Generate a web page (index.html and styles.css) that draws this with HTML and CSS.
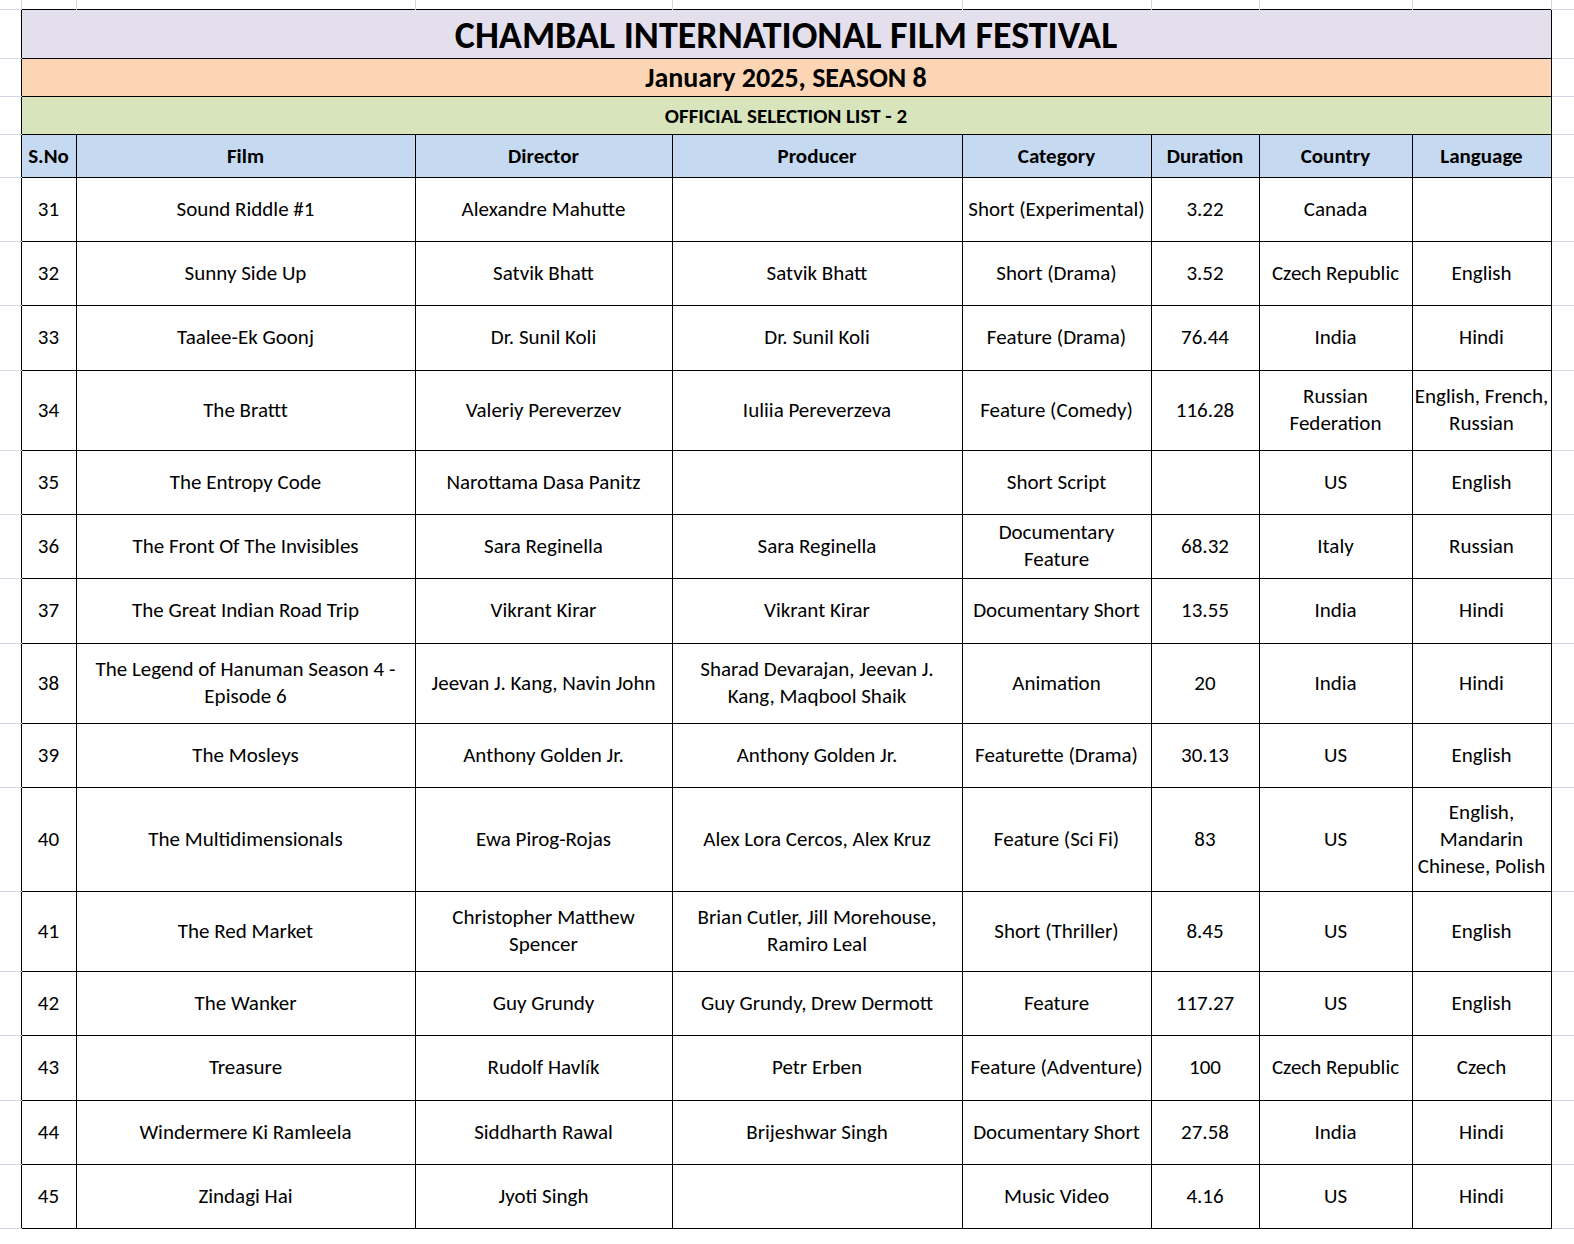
FILE: index.html
```html
<!DOCTYPE html>
<html lang="en">
<head>
<meta charset="utf-8">
<title>Chambal International Film Festival – Official Selection List 2</title>
<link rel="stylesheet" href="styles.css">
</head>
<body>
<table class="sheet">
  <colgroup>
    <col class="c-ml">
    <col class="c-sno">
    <col class="c-film">
    <col class="c-dir">
    <col class="c-prod">
    <col class="c-cat">
    <col class="c-dur">
    <col class="c-cty">
    <col class="c-lang">
    <col class="c-mr">
  </colgroup>
  <tbody>
    <tr class="r-top">
      <td class="tl"></td>
      <td class="tg"></td><td class="tg"></td><td class="tg"></td><td class="tg"></td>
      <td class="tg"></td><td class="tg"></td><td class="tg"></td><td class="tg"></td>
      <td class="tr"></td>
    </tr>
    <tr class="r-title">
      <td class="ml"></td>
      <td colspan="8" class="title">CHAMBAL INTERNATIONAL FILM FESTIVAL</td>
      <td class="mr"></td>
    </tr>
    <tr class="r-sub">
      <td class="ml"></td>
      <td colspan="8" class="sub">January 2025, SEASON 8</td>
      <td class="mr"></td>
    </tr>
    <tr class="r-list">
      <td class="ml"></td>
      <td colspan="8" class="list">OFFICIAL SELECTION LIST - 2</td>
      <td class="mr"></td>
    </tr>
    <tr class="r-head">
      <td class="ml"></td>
      <th>S.No</th><th>Film</th><th>Director</th><th>Producer</th>
      <th>Category</th><th>Duration</th><th>Country</th><th>Language</th>
      <td class="mr"></td>
    </tr>
    <tr class="r1">
      <td class="ml"></td>
      <td>31</td><td>Sound Riddle #1</td><td>Alexandre Mahutte</td><td></td>
      <td>Short (Experimental)</td><td>3.22</td><td>Canada</td><td></td>
      <td class="mr"></td>
    </tr>
    <tr class="r1">
      <td class="ml"></td>
      <td>32</td><td>Sunny Side Up</td><td>Satvik Bhatt</td><td>Satvik Bhatt</td>
      <td>Short (Drama)</td><td>3.52</td><td>Czech Republic</td><td>English</td>
      <td class="mr"></td>
    </tr>
    <tr class="r1b">
      <td class="ml"></td>
      <td>33</td><td>Taalee-Ek Goonj</td><td>Dr. Sunil Koli</td><td>Dr. Sunil Koli</td>
      <td>Feature (Drama)</td><td>76.44</td><td>India</td><td>Hindi</td>
      <td class="mr"></td>
    </tr>
    <tr class="r2">
      <td class="ml"></td>
      <td>34</td><td>The Brattt</td><td>Valeriy Pereverzev</td><td>Iuliia Pereverzeva</td>
      <td>Feature (Comedy)</td><td>116.28</td><td>Russian<br>Federation</td><td>English, French,<br>Russian</td>
      <td class="mr"></td>
    </tr>
    <tr class="r1">
      <td class="ml"></td>
      <td>35</td><td>The Entropy Code</td><td>Narottama Dasa Panitz</td><td></td>
      <td>Short Script</td><td></td><td>US</td><td>English</td>
      <td class="mr"></td>
    </tr>
    <tr class="r1">
      <td class="ml"></td>
      <td>36</td><td>The Front Of The Invisibles</td><td>Sara Reginella</td><td>Sara Reginella</td>
      <td>Documentary<br>Feature</td><td>68.32</td><td>Italy</td><td>Russian</td>
      <td class="mr"></td>
    </tr>
    <tr class="r1b">
      <td class="ml"></td>
      <td>37</td><td>The Great Indian Road Trip</td><td>Vikrant Kirar</td><td>Vikrant Kirar</td>
      <td>Documentary Short</td><td>13.55</td><td>India</td><td>Hindi</td>
      <td class="mr"></td>
    </tr>
    <tr class="r2">
      <td class="ml"></td>
      <td>38</td><td>The Legend of Hanuman Season 4 -<br>Episode 6</td><td>Jeevan J. Kang, Navin John</td><td>Sharad Devarajan, Jeevan J.<br>Kang, Maqbool Shaik</td>
      <td>Animation</td><td>20</td><td>India</td><td>Hindi</td>
      <td class="mr"></td>
    </tr>
    <tr class="r1">
      <td class="ml"></td>
      <td>39</td><td>The Mosleys</td><td>Anthony Golden Jr.</td><td>Anthony Golden Jr.</td>
      <td>Featurette (Drama)</td><td>30.13</td><td>US</td><td>English</td>
      <td class="mr"></td>
    </tr>
    <tr class="r3">
      <td class="ml"></td>
      <td>40</td><td>The Multidimensionals</td><td>Ewa Pirog-Rojas</td><td>Alex Lora Cercos, Alex Kruz</td>
      <td>Feature (Sci Fi)</td><td>83</td><td>US</td><td>English,<br>Mandarin<br>Chinese, Polish</td>
      <td class="mr"></td>
    </tr>
    <tr class="r2">
      <td class="ml"></td>
      <td>41</td><td>The Red Market</td><td>Christopher Matthew<br>Spencer</td><td>Brian Cutler, Jill Morehouse,<br>Ramiro Leal</td>
      <td>Short (Thriller)</td><td>8.45</td><td>US</td><td>English</td>
      <td class="mr"></td>
    </tr>
    <tr class="r1">
      <td class="ml"></td>
      <td>42</td><td>The Wanker</td><td>Guy Grundy</td><td>Guy Grundy, Drew Dermott</td>
      <td>Feature</td><td>117.27</td><td>US</td><td>English</td>
      <td class="mr"></td>
    </tr>
    <tr class="r1b">
      <td class="ml"></td>
      <td>43</td><td>Treasure</td><td>Rudolf Havlík</td><td>Petr Erben</td>
      <td>Feature (Adventure)</td><td>100</td><td>Czech Republic</td><td>Czech</td>
      <td class="mr"></td>
    </tr>
    <tr class="r1">
      <td class="ml"></td>
      <td>44</td><td>Windermere Ki Ramleela</td><td>Siddharth Rawal</td><td>Brijeshwar Singh</td>
      <td>Documentary Short</td><td>27.58</td><td>India</td><td>Hindi</td>
      <td class="mr"></td>
    </tr>
    <tr class="r1">
      <td class="ml"></td>
      <td>45</td><td>Zindagi Hai</td><td>Jyoti Singh</td><td></td>
      <td>Music Video</td><td>4.16</td><td>US</td><td>Hindi</td>
      <td class="mr"></td>
    </tr>
  </tbody>
</table>
</body>
</html>
```
FILE: styles.css
```css
html, body {
  margin: 0;
  padding: 0;
  background: #ffffff;
}

.sheet {
  border-collapse: collapse;
  table-layout: fixed;
  width: 1574px;
  font-family: "Carlito", "Lato", "Liberation Sans", sans-serif;
  font-size: 21px;
  color: #000;
}

.c-ml   { width: 21px; }
.c-sno  { width: 55px; }
.c-film { width: 339px; }
.c-dir  { width: 257px; }
.c-prod { width: 290px; }
.c-cat  { width: 189px; }
.c-dur  { width: 108px; }
.c-cty  { width: 153px; }
.c-lang { width: 139px; }
.c-mr   { width: 23px; }

.sheet td,
.sheet th {
  border: 1px solid #000;
  padding: 0 2px;
  text-align: center;
  vertical-align: middle;
  line-height: 27px;
  white-space: nowrap;
  overflow: hidden;
}

/* faint spreadsheet gridlines outside the printed area */
.sheet td.tl {
  border: none;
  border-right: 1px solid #d0d7e5;
  border-bottom: 1px solid #d0d7e5;
}
.sheet td.tg {
  border: none;
  border-left: 1px solid #d0d7e5;
  border-right: 1px solid #d0d7e5;
}
.sheet td.tr {
  border: none;
  border-left: 1px solid #d0d7e5;
  border-bottom: 1px solid #d0d7e5;
}
.sheet td.ml {
  border: none;
  border-top: 1px solid #d0d7e5;
  border-bottom: 1px solid #d0d7e5;
}
.sheet td.mr {
  border: none;
  border-top: 1px solid #d0d7e5;
  border-bottom: 1px solid #d0d7e5;
}

.r-top   { height: 9px; }
.r-title { height: 49px; }
.r-sub   { height: 38px; }
.r-list  { height: 38px; }
.r-head  { height: 43px; }
.r1      { height: 64px; }
.r1b     { height: 65px; }
.r2      { height: 80px; }
.r3      { height: 104px; }

.sheet td.title {
  background: #e4dfec;
  font-weight: bold;
  font-size: 38px;
  line-height: 44px;
  padding-top: 3px;
}
.sheet td.sub {
  background: #fcd5b4;
  font-weight: bold;
  font-size: 28px;
  line-height: 32px;
  padding-top: 2px;
}
.sheet td.list {
  background: #d8e4bc;
  font-weight: bold;
  font-size: 21px;
  line-height: 26px;
  padding-top: 1px;
}
.sheet th {
  background: #c5d9f1;
  font-weight: bold;
  font-size: 21px;
  padding-top: 1px;
}
```
